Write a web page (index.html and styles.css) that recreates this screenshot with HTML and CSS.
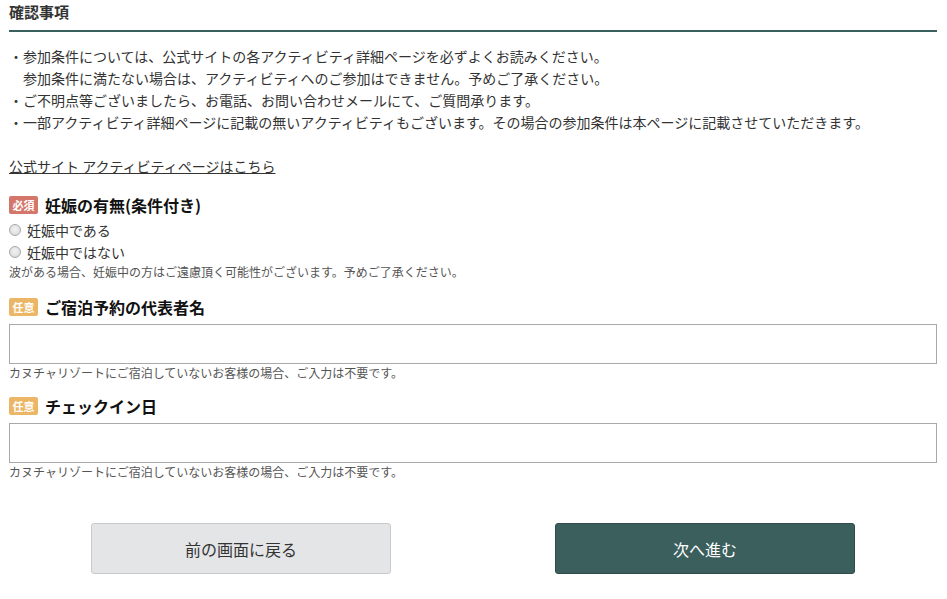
FILE: index.html
```html
<!DOCTYPE html>
<html lang="ja">
<head>
    <meta charset="UTF-8">
    <title>確認事項</title>
    <link rel="stylesheet" href="styles.css">
</head>
<body>
    <div class="page">
        <h2 class="section-title">確認事項</h2>

        <ul class="notes">
            <li>参加条件については、公式サイトの各アクティビティ詳細ページを必ずよくお読みください。<br>参加条件に満たない場合は、アクティビティへのご参加はできません。予めご了承ください。</li>
            <li>ご不明点等ございましたら、お電話、お問い合わせメールにて、ご質問承ります。</li>
            <li>一部アクティビティ詳細ページに記載の無いアクティビティもございます。その場合の参加条件は本ページに記載させていただきます。</li>
        </ul>

        <a class="site-link" href="#">公式サイト アクティビティページはこちら</a>

        <!-- 妊娠の有無 -->
        <div class="field field-first">
            <div class="field-title"><span class="badge required">必須</span>妊娠の有無(条件付き)</div>
            <label class="radio"><input type="radio" name="pregnant"><span>妊娠中である</span></label>
            <label class="radio"><input type="radio" name="pregnant"><span>妊娠中ではない</span></label>
            <p class="hint">波がある場合、妊娠中の方はご遠慮頂く可能性がございます。予めご了承ください。</p>
        </div>

        <!-- 代表者名 -->
        <div class="field">
            <div class="field-title"><span class="badge optional">任意</span>ご宿泊予約の代表者名</div>
            <input class="text-input" type="text">
            <p class="hint">カヌチャリゾートにご宿泊していないお客様の場合、ご入力は不要です。</p>
        </div>

        <!-- チェックイン日 -->
        <div class="field">
            <div class="field-title"><span class="badge optional">任意</span>チェックイン日</div>
            <input class="text-input" type="text">
            <p class="hint">カヌチャリゾートにご宿泊していないお客様の場合、ご入力は不要です。</p>
        </div>

        <div class="actions">
            <div class="action-col"><button class="btn btn-back">前の画面に戻る</button></div>
            <div class="action-col"><button class="btn btn-next">次へ進む</button></div>
        </div>
    </div>
</body>
</html>
```

FILE: styles.css
```css
/* 全体 */
body {
    margin: 0;
    font-family: "Noto Sans CJK JP", "Noto Sans", sans-serif;
    color: #333;
    background-color: #fff;
}
.page {
    width: 928px;
    margin-left: 9px;
}
.section-title {
    margin: 0;
    font-size: 15px;
    font-weight: bold;
    line-height: 24px;
    padding-top: 0;
    padding-bottom: 6px;
    border-bottom: 2px solid #3b5f5c;
}
/* 注意事項リスト */
.notes {
    list-style: none;
    margin: 13px 0 0;
    padding: 0;
    font-size: 14px;
    line-height: 22px;
}
.notes li {
    position: relative;
    padding-left: 14px;
}
.notes li::before {
    content: "・";
    position: absolute;
    left: 0;
    top: 0;
}
.site-link {
    display: inline-block;
    margin-top: 22px;
    font-size: 14px;
    line-height: 22px;
    color: #333;
}
/* 入力項目 */
.field {
    margin-top: 12px;
}
.field-first {
    margin-top: 16px;
    padding-bottom: 2px;
}
.field-title {
    display: flex;
    align-items: center;
    font-size: 16px;
    font-weight: bold;
    line-height: 24px;
    color: #111;
}
.badge {
    display: inline-block;
    width: 29px;
    height: 18px;
    line-height: 18px;
    margin-right: 7px;
    border-radius: 2px;
    color: #fff;
    font-size: 11px;
    font-weight: bold;
    text-align: center;
}
.badge.required {
    background-color: #d4776a;
}
.badge.optional {
    background-color: #ebb766;
}
.radio {
    display: flex;
    align-items: center;
    font-size: 14px;
    line-height: 22px;
}
.radio input {
    appearance: none;
    width: 12px;
    height: 12px;
    margin: 0 6px 0 0;
    border: 1px solid #a8a8a8;
    border-radius: 50%;
    background: radial-gradient(circle at 50% 40%, #f2f2f2, #d6d6d6);
}
.field-first .radio:first-of-type {
    margin-top: 2px;
}
.hint {
    margin: 0;
    font-size: 12px;
    line-height: 18px;
    color: #555;
}
.text-input {
    display: block;
    box-sizing: border-box;
    width: 100%;
    height: 40px;
    margin-top: 5px;
    border: 1px solid #a9a9a9;
    padding: 0 8px;
    font-size: 14px;
}
/* ボタン */
.actions {
    display: flex;
    margin-top: 42px;
}
.action-col {
    flex: 1;
    display: flex;
    justify-content: center;
}
.btn {
    width: 300px;
    height: 51px;
    border-radius: 3px;
    font-family: inherit;
    font-size: 16px;
    cursor: pointer;
}
.btn-back {
    background-color: #e4e5e7;
    border: 1px solid #c9cacc;
    color: #333;
}
.btn-next {
    background-color: #3b5f5c;
    border: 1px solid #2f4c4a;
    color: #fff;
}
```
